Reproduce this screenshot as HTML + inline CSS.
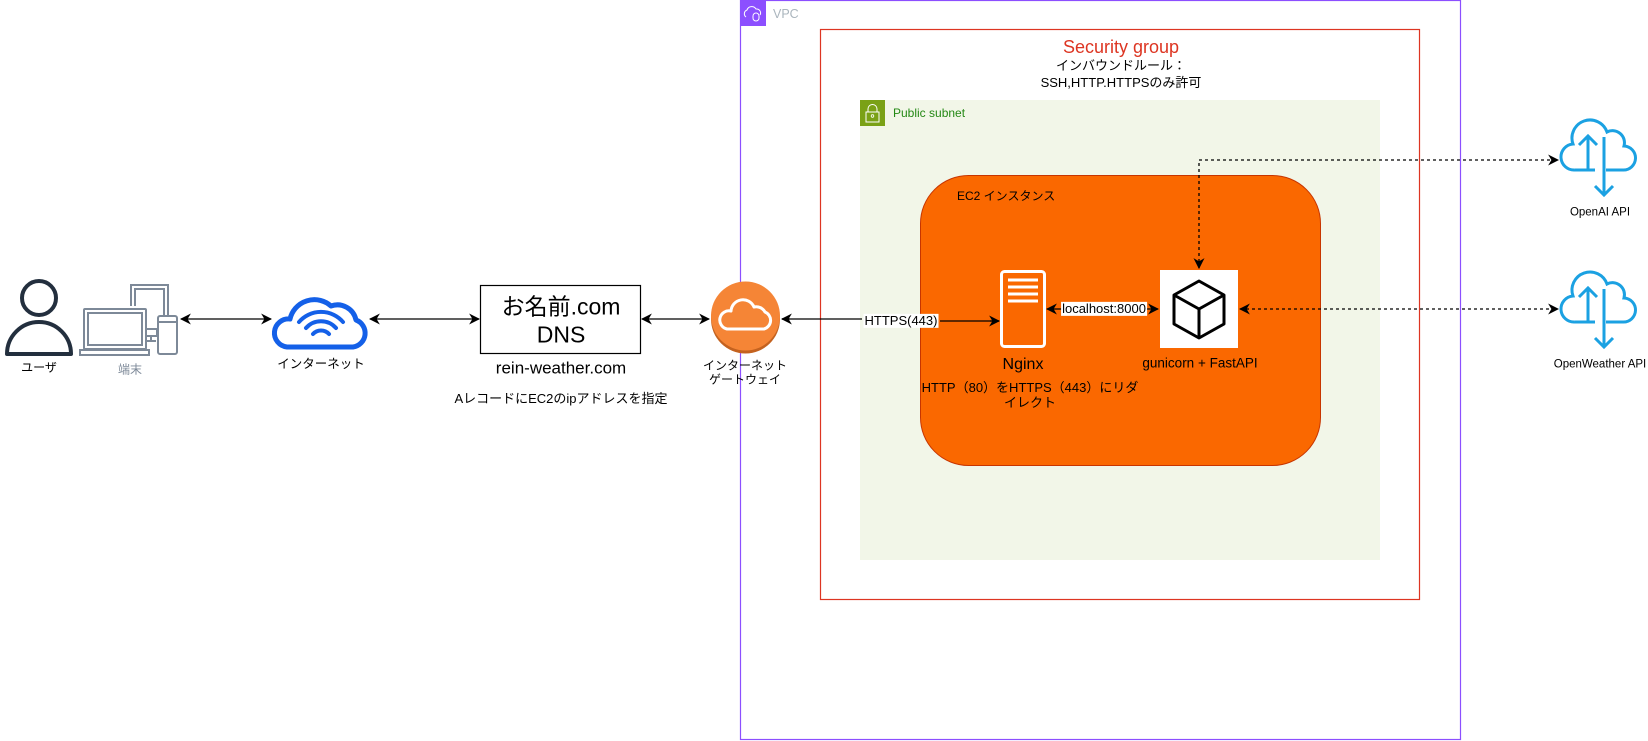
<!DOCTYPE html>
<html><head><meta charset="utf-8"><style>
html,body{margin:0;padding:0;background:#fff;}
body{width:1648px;height:741px;position:relative;overflow:hidden;font-family:"Liberation Sans","Noto Sans CJK JP",sans-serif;}
.t{position:absolute;white-space:nowrap;transform:translate(-50%,-50%);line-height:1.1;}
.l{position:absolute;white-space:nowrap;line-height:1.1;}
</style></head><body>
<svg width="1648" height="741" style="position:absolute;left:0;top:0">
<defs>
<marker id="a" viewBox="0 0 10 10" refX="9" refY="5" markerWidth="11" markerHeight="11" markerUnits="userSpaceOnUse" orient="auto-start-reverse"><path d="M0,0 L10,5 L0,10 L3,5 Z" fill="#000"/></marker>
</defs>
<rect x="740.5" y="0.5" width="720" height="739" fill="none" stroke="#8c4fff" stroke-width="1.2"/>
<rect x="740" y="0" width="26" height="26" fill="#8c4fff"/>
<path d="M746,17 a4,4 0 0 1 1,-7 a5,5 0 0 1 9,-1 a4,4 0 0 1 4,6" fill="none" stroke="#fff" stroke-width="1"/>
<rect x="753" y="13" width="6" height="8" rx="3" fill="none" stroke="#fff" stroke-width="1"/>
<rect x="820.5" y="29.5" width="599" height="570" fill="none" stroke="#dd3522" stroke-width="1.2"/>
<rect x="860" y="100" width="520" height="460" fill="#f2f6e8"/>
<rect x="860" y="100" width="25" height="26" fill="#7aa116"/>
<path d="M868,112 v-3 a4.5,4.5 0 0 1 9,0 v3" fill="none" stroke="#fff" stroke-width="1"/>
<rect x="866" y="112" width="13" height="10" fill="none" stroke="#fff" stroke-width="1"/>
<circle cx="872.5" cy="116" r="1.3" fill="none" stroke="#fff" stroke-width="0.8"/>
<rect x="920.5" y="175.5" width="400" height="290" rx="48" fill="#fa6800" stroke="#c73500" stroke-width="1"/>
<circle cx="39" cy="298" r="17" fill="none" stroke="#232f3e" stroke-width="4"/>
<path d="M7,354 A32,32 0 0 1 71,354 Z" fill="none" stroke="#232f3e" stroke-width="4" stroke-linejoin="round"/>
<g fill="none" stroke="#7d8998" stroke-width="2">
<path d="M131,306 V285 H168 V316"/>
<path d="M135,306 V289 H164 V316"/>
<rect x="84" y="309" width="62" height="40" rx="1"/>
<rect x="88" y="313" width="54" height="32"/>
<path d="M80,350 H149 V355 H80 Z"/>
<rect x="158" y="316" width="19" height="38" rx="2"/>
<path d="M158,322 H177"/>
<rect x="146" y="329" width="11" height="7"/>
<path d="M151,336 V341 M146,341 H156"/>
</g>
<path d="M287,347 H353 A14,14 0 0 0 356,320 A19,19 0 0 0 331,306 A25,25 0 0 0 290,319 A14,14 0 0 0 287,347 Z" fill="none" stroke="#1460e8" stroke-width="5" stroke-linejoin="round"/>
<g fill="none" stroke="#1460e8" stroke-width="4" stroke-linecap="round">
<path d="M313,334 A11,11 0 0 1 329,334"/>
<path d="M306,328 A20,20 0 0 1 336,328"/>
<path d="M299,322 A29,29 0 0 1 343,322"/>
</g>
<rect x="480.5" y="285.5" width="160" height="68" fill="#fff" stroke="#000" stroke-width="1.2"/>
<circle cx="745.5" cy="319" r="34.5" fill="#c4621f"/>
<circle cx="745.5" cy="316" r="34.5" fill="#f58536"/>
<path d="M727,329 H764 A9,9 0 0 0 765,312 A10,10 0 0 0 754,307 A12,12 0 0 0 731,311 A9,9 0 0 0 727,329 Z" fill="none" stroke="#fff" stroke-width="3" stroke-linejoin="round"/>
<rect x="1001.5" y="271.5" width="43" height="75" rx="3" fill="none" stroke="#fff" stroke-width="3"/>
<g stroke="#fff" stroke-width="3"><path d="M1008,280 H1038 M1008,287 H1038 M1008,294 H1038 M1008,301 H1038"/></g>
<rect x="1160" y="270" width="78" height="78" fill="#fff"/>
<g fill="none" stroke="#000" stroke-width="3" stroke-linejoin="round">
<path d="M1199,281 L1224,295 L1224,324 L1199,338 L1174,324 L1174,295 Z"/>
<path d="M1174,295 L1199,309 L1224,295 M1199,309 V338"/>
</g>
<g fill="none" stroke="#1ba1e2" stroke-width="3">
<path d="M1575,170 A13,13 0 0 1 1573,144 A18,18 0 0 1 1607,132 A12,12 0 0 1 1624,146 A12,12 0 0 1 1623,170 H1606 M1595,170 H1575"/>
<path d="M1588,169 V136 M1579,145 L1588,136 L1597,145"/>
<path d="M1604,137 V195 M1595,186 L1604,195 L1613,186"/>
<path d="M1575,322 A13,13 0 0 1 1573,296 A18,18 0 0 1 1607,284 A12,12 0 0 1 1624,298 A12,12 0 0 1 1623,322 H1606 M1595,322 H1575"/>
<path d="M1588,321 V288 M1579,297 L1588,288 L1597,297"/>
<path d="M1604,289 V347 M1595,338 L1604,347 L1613,338"/>
</g>
<g stroke="#000" stroke-width="1.3" fill="none">
<path d="M181,319 H271" marker-start="url(#a)" marker-end="url(#a)"/>
<path d="M370,319 H479" marker-start="url(#a)" marker-end="url(#a)"/>
<path d="M642,319 H709" marker-start="url(#a)" marker-end="url(#a)"/>
<path d="M782,319 H862 M940,321 H999" />
<path d="M790,319 H782" marker-end="url(#a)"/>
<path d="M990,321 H999" marker-end="url(#a)"/>
<path d="M1047,309 H1158" marker-start="url(#a)" marker-end="url(#a)"/>
<path d="M1199,268 V160 H1558" stroke-dasharray="3,3" marker-start="url(#a)" marker-end="url(#a)"/>
<path d="M1240,309 H1558" stroke-dasharray="3,3" marker-start="url(#a)" marker-end="url(#a)"/>
</g>
</svg>
<div class="l" style="left:773px;top:8px;font-size:12.5px;color:#aab5bd">VPC</div>
<div class="t" style="left:1121px;top:48px;font-size:18px;color:#dd3522">Security group</div>
<div class="t" style="left:1121px;top:66px;font-size:13px">インバウンドルール：</div>
<div class="t" style="left:1121px;top:83px;font-size:13px">SSH,HTTP.HTTPSのみ許可</div>
<div class="l" style="left:893px;top:107px;font-size:12px;color:#248814">Public subnet</div>
<div class="l" style="left:957px;top:190px;font-size:12px">EC2 インスタンス</div>
<div class="t" style="left:39px;top:368px;font-size:12px">ユーザ</div>
<div class="t" style="left:130px;top:370px;font-size:12px;color:#7d8998">端末</div>
<div class="t" style="left:321px;top:365px;font-size:12.5px">インターネット</div>
<div class="t" style="left:561px;top:307px;font-size:23px">お名前.com</div>
<div class="t" style="left:561px;top:335px;font-size:23px">DNS</div>
<div class="t" style="left:561px;top:369px;font-size:17px">rein-weather.com</div>
<div class="t" style="left:561px;top:399px;font-size:13px">AレコードにEC2のipアドレスを指定</div>
<div class="t" style="left:745px;top:366px;font-size:12px">インターネット</div>
<div class="t" style="left:745px;top:380px;font-size:12px">ゲートウェイ</div>
<div class="t" style="left:901px;top:321px;font-size:13px;background:#fff;padding:0 1px">HTTPS(443)</div>
<div class="t" style="left:1104px;top:309px;font-size:13px;background:#fff;padding:0 1px">localhost:8000</div>
<div class="t" style="left:1023px;top:365px;font-size:16px">Nginx</div>
<div class="t" style="left:1030px;top:388px;font-size:13px">HTTP（80）をHTTPS（443）にリダ</div>
<div class="t" style="left:1030px;top:403px;font-size:13px">イレクト</div>
<div class="t" style="left:1200px;top:364px;font-size:13.5px">gunicorn + FastAPI</div>
<div class="t" style="left:1600px;top:213px;font-size:11.5px">OpenAI API</div>
<div class="t" style="left:1600px;top:365px;font-size:11.5px">OpenWeather API</div>
</body></html>
